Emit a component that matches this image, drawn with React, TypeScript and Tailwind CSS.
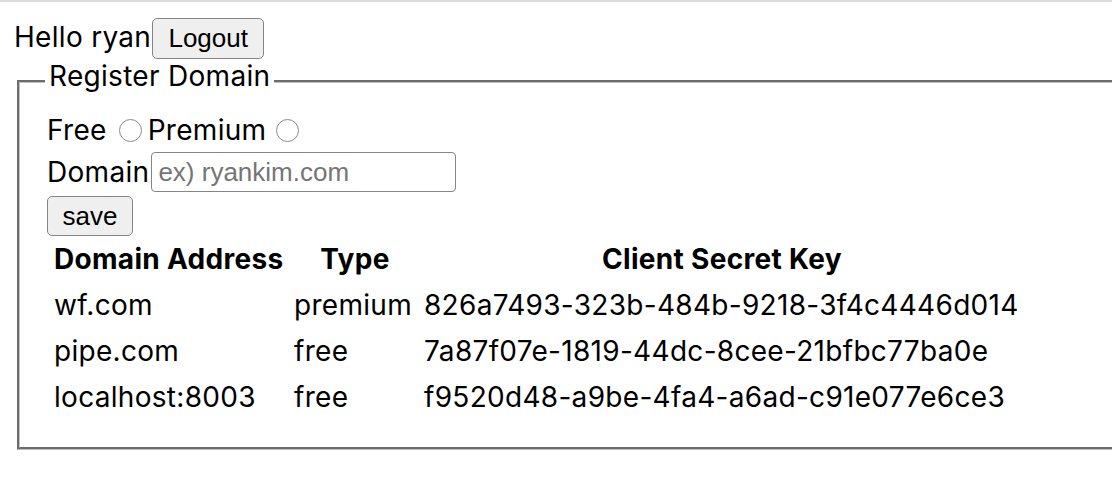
const DOMAINS = [
  { address: 'wf.com', type: 'premium', key: '826a7493-323b-484b-9218-3f4c4446d014' },
  { address: 'pipe.com', type: 'free', key: '7a87f07e-1819-44dc-8cee-21bfbc77ba0e' },
  { address: 'localhost:8003', type: 'free', key: 'f9520d48-a9be-4fa4-a6ad-c91e077e6ce3' },
];

const body = "[font-family:Inter,'Noto_Sans',sans-serif]";
const ctrl = "[font-family:'Liberation_Sans',Arial,sans-serif]";

function Radio({ name }: { name: string }) {
  return (
    <input
      type="radio"
      name={name}
      className="appearance-none w-[23px] h-[23px] rounded-full border-[1.5px] border-[#8a8a8a] bg-white m-0 shrink-0"
    />
  );
}

export default function App() {
  return (
    <div className={`min-h-screen overflow-hidden bg-white text-black text-[28px] leading-[34px] tracking-[0.3px] ${body}`}>
      <div className="h-[2px] bg-[#dcdce1]" />

      <div className="pl-[14px] pt-[16px]">
        {/* greeting */}
        <div className="flex items-baseline">
          <span className="whitespace-nowrap">Hello ryan</span>
          <button
            className={`h-[41px] w-[112px] ml-[1px] rounded-[5px] border-[1.5px] border-[#858585] bg-[#efefef] text-[26px] leading-[29px] tracking-normal ${ctrl}`}
          >
            Logout
          </button>
        </div>

        {/* register form */}
        <fieldset className="ml-[3px] w-[1200px] border-[3px] [border-style:groove] border-[#c0c0c0] pl-[25px] pr-[21px] pt-[8px] pb-[27px]">
          <legend className="px-[4px] pb-[11px] leading-[34px]">Register Domain</legend>

          <div className="flex items-center h-[36px] pl-[2px]">
            <span>Free</span>
            <span className="ml-[12px] mr-[6px] flex"><Radio name="type" /></span>
            <span>Premium</span>
            <span className="ml-[10px] flex"><Radio name="type" /></span>
          </div>

          <div className="flex items-center h-[42px] mt-[3px] pl-[2px]">
            <span>Domain</span>
            <input
              placeholder="ex) ryankim.com"
              className={`ml-[2px] w-[305px] h-[40px] rounded-[4px] border-[1.5px] border-[#858585] px-[6px] text-[26px] tracking-normal placeholder:text-[#757575] outline-none ${ctrl}`}
            />
          </div>

          <button
            className={`mt-[3px] ml-[2px] h-[40px] w-[86px] rounded-[5px] border-[1.5px] border-[#858585] bg-[#efefef] text-[26px] leading-[29px] tracking-normal ${ctrl}`}
          >
            save
          </button>

          {/* domain list */}
          <div className="grid grid-cols-[239px_130px_604px] ml-[6px]">
            <div className="h-[46px] leading-[46px] font-bold pl-[3px] whitespace-nowrap">Domain Address</div>
            <div className="h-[46px] leading-[46px] font-bold text-center">Type</div>
            <div className="h-[46px] leading-[46px] font-bold text-center">Client Secret Key</div>
            {DOMAINS.map((d) => (
              <div key={d.key} className="contents">
                <div className="h-[46px] leading-[46px] pl-[3px] whitespace-nowrap">{d.address}</div>
                <div className="h-[46px] leading-[46px] pl-[4px]">{d.type}</div>
                <div className="h-[46px] leading-[46px] pl-[4px] whitespace-nowrap">{d.key}</div>
              </div>
            ))}
          </div>
        </fieldset>
      </div>
    </div>
  );
}
